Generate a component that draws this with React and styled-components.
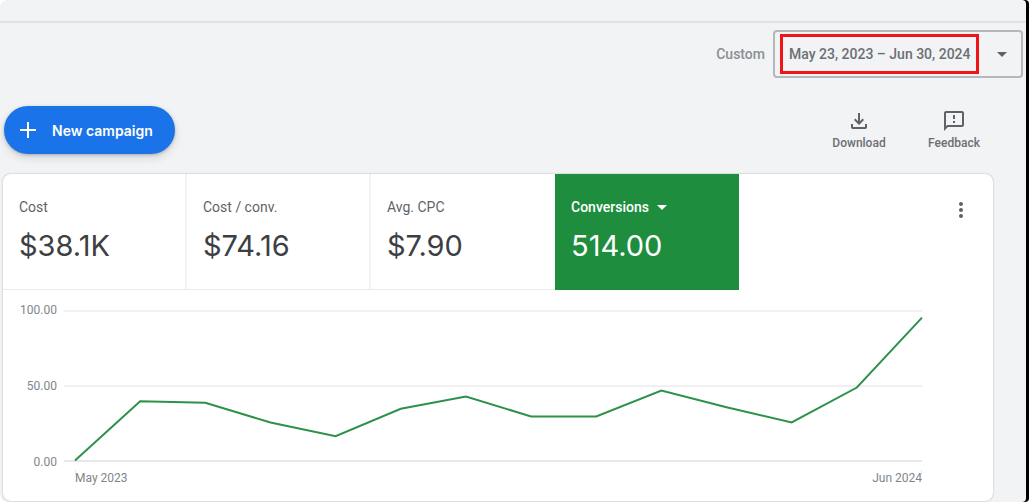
import React from 'react';
import styled, { createGlobalStyle } from 'styled-components';
import { MdMoreVert, MdOutlineFeedback } from 'react-icons/md';

const GlobalStyle = createGlobalStyle`
  * {
    box-sizing: border-box;
  }

  body {
    margin: 0;
    background: #fff;
    font-family: Roboto, 'Liberation Sans', sans-serif;
    color: #3c4043;
  }

  button,
  select {
    font-family: inherit;
    border: 0;
    margin: 0;
    background: none;
    cursor: pointer;
  }
`;

const Shell = styled.div`
  display: flex;
  flex-direction: column;
  margin-right: 5px;
  background: #f1f3f4;
  border-radius: 8px 4px 4px 8px;
  box-shadow: 3px 0 0 #000;
`;

const TopStrip = styled.header`
  height: 23px;
  border-bottom: 2px solid #e0e2e5;
`;

const DateBar = styled.div`
  display: flex;
  justify-content: flex-end;
  align-items: center;
  gap: 8px;
  padding: 7px 3px 0 0;
`;

const DateLabel = styled.label`
  font-size: 14px;
  font-weight: 500;
  color: #8a8f94;
`;

const DateField = styled.div`
  position: relative;
  display: grid;
  align-items: center;
  width: 250px;
  height: 48px;
  border: 2px solid #b4b8bc;
  border-radius: 4px;

  svg {
    grid-area: 1 / 1;
    justify-self: end;
    margin-right: 14px;
    color: #5f6368;
    pointer-events: none;
  }
`;

const DateSelect = styled.select`
  grid-area: 1 / 1;
  appearance: none;
  width: 100%;
  height: 100%;
  padding: 0 32px 0 14px;
  font-size: 14px;
  font-weight: 500;
  color: #6b6f74;
`;

const Highlight = styled.span`
  position: absolute;
  top: 2px;
  left: 5px;
  width: 199px;
  height: 40px;
  border: 3px solid #f01418;
  pointer-events: none;
`;

const Toolbar = styled.div`
  display: flex;
  justify-content: space-between;
  align-items: center;
  padding: 28px 37px 20px 4px;
`;

const NewButton = styled.button`
  display: flex;
  align-items: center;
  gap: 15px;
  height: 48px;
  padding: 0 22px 0 15px;
  border-radius: 24px;
  background: #1a73e8;
  box-shadow: 0 1px 3px rgba(60, 64, 67, 0.3), 0 4px 8px rgba(60, 64, 67, 0.15);
  font-family: Inter, Roboto, sans-serif;
  font-size: 14px;
  font-weight: 600;
  color: #fff;
`;

const Actions = styled.div`
  display: flex;
  gap: 25px;
`;

const Action = styled.button`
  display: flex;
  flex-direction: column;
  align-items: center;
  gap: 2px;
  width: 70px;
  padding: 0;
  font-size: 12px;
  line-height: 16px;
  font-weight: 500;
  color: #6b6f74;

  svg {
    color: #5f6368;
  }
`;

const Card = styled.section`
  margin: 0 33px 1px 3px;
  background: #fff;
  border-radius: 8px;
  box-shadow: 0 0 2px rgba(60, 64, 67, 0.4);
`;

const Metrics = styled.div`
  display: flex;
  align-items: flex-start;
`;

const Metric = styled.div`
  flex: 0 1 184px;
  height: 116px;
  padding: 23px 16px 0;
  border-right: ${p => (p.$active ? '0' : '2px solid #f1f2f3')};
  border-bottom: ${p => (p.$active ? '0' : '1px solid #e8eaed')};
  background: ${p => (p.$active ? '#1e8e3e' : 'transparent')};
  color: ${p => (p.$active ? '#fff' : '#3c4043')};

  &:nth-child(3) {
    border-right: 0;
  }
`;

const MetricName = styled.div`
  display: flex;
  height: 20px;
  font-size: 14px;
  line-height: 20px;
  color: #5f6368;
`;

const MetricPicker = styled.div`
  display: inline-grid;
  align-items: center;
  color: #fff;

  select {
    grid-area: 1 / 1;
    appearance: none;
    padding: 0 18px 0 0;
    font-size: 14px;
    font-weight: 500;
    color: inherit;
  }

  option {
    color: #3c4043;
  }

  svg {
    grid-area: 1 / 1;
    justify-self: end;
    pointer-events: none;
  }
`;

const MetricValue = styled.div`
  margin-top: 11px;
  font-family: Inter, Roboto, sans-serif;
  font-size: 29px;
  line-height: 36px;
`;

const MoreButton = styled.button`
  display: flex;
  margin: 24px 20px 0 auto;
  padding: 0;
  color: #5f6368;
`;

const Chart = styled.div`
  display: grid;
  grid-template-columns: 37px 1fr;
  column-gap: 7px;
  padding: 12px 71px 15px 17px;
  font-size: 12px;
  line-height: 16px;
  color: #80868b;
`;

const YAxis = styled.div`
  display: flex;
  flex-direction: column;
  justify-content: space-between;
  height: 168px;
  text-align: right;
`;

const Plot = styled.div`
  height: 152px;
  margin-top: 8px;
  padding-left: 11px;
  background: linear-gradient(#f0f0f1, #f0f0f1) 0 0 / 100% 2px no-repeat,
    linear-gradient(#f0f0f1, #f0f0f1) 0 50% / 100% 2px no-repeat,
    linear-gradient(#e8e8ea, #e8e8ea) 0 100% / 100% 2px no-repeat;

  svg {
    display: block;
    width: 100%;
    height: 100%;
    overflow: visible;
  }
`;

const XAxis = styled.div`
  grid-column: 2;
  display: flex;
  justify-content: space-between;
  margin-left: 11px;
  background: linear-gradient(#e8e8ea, #e8e8ea) 0 0 / 1px 5px no-repeat,
    linear-gradient(#e8e8ea, #e8e8ea) 100% 0 / 1px 5px no-repeat;
`;

const months = [1, 40, 39, 26, 17, 35, 43, 30, 30, 47, 36, 26, 49, 95];

const points = months
  .map((value, i) => `${(i * 1000) / (months.length - 1)},${100 - value}`)
  .join(' ');

const metrics = [
  { name: 'Cost', value: '$38.1K' },
  { name: 'Cost / conv.', value: '$74.16' },
  { name: 'Avg. CPC', value: '$7.90' },
  { name: 'Conversions', value: '514.00', active: true },
];

const Caret = () => (
  <svg width="10" height="5" viewBox="0 0 10 5" aria-hidden="true">
    <path d="M0 0h10L5 5z" fill="currentColor" />
  </svg>
);

const PlusIcon = () => (
  <svg width="18" height="18" viewBox="0 0 18 18" aria-hidden="true">
    <path d="M9 1v16M1 9h16" stroke="currentColor" strokeWidth="2" />
  </svg>
);

const DownloadIcon = () => (
  <svg width="24" height="24" viewBox="0 0 24 24" aria-hidden="true">
    <path
      fill="currentColor"
      d="M12 16l-5-5 1.4-1.45 2.6 2.6V4h2v8.15l2.6-2.6L17 11zM6 20q-.825 0-1.412-.587Q4 18.825 4 18v-3h2v3h12v-3h2v3q0 .825-.587 1.413Q18.825 20 18 20z"
    />
  </svg>
);

const App = () => (
  <>
    <GlobalStyle />
    <Shell>
      <TopStrip />
      <DateBar>
        <DateLabel htmlFor="range">Custom</DateLabel>
        <DateField>
          <DateSelect id="range">
            <option>May 23, 2023 – Jun 30, 2024</option>
          </DateSelect>
          <Caret />
          <Highlight />
        </DateField>
      </DateBar>

      <Toolbar>
        <NewButton>
          <PlusIcon />
          New campaign
        </NewButton>
        <Actions>
          <Action>
            <DownloadIcon />
            Download
          </Action>
          <Action>
            <MdOutlineFeedback size={24} />
            Feedback
          </Action>
        </Actions>
      </Toolbar>

      <Card>
        <Metrics>
          {metrics.map(({ name, value, active }) => (
            <Metric key={name} $active={active}>
              <MetricName>
                {active ? (
                  <MetricPicker>
                    <select aria-label="Metric">
                      <option>{name}</option>
                    </select>
                    <Caret />
                  </MetricPicker>
                ) : (
                  name
                )}
              </MetricName>
              <MetricValue>{value}</MetricValue>
            </Metric>
          ))}
          <MoreButton aria-label="More options">
            <MdMoreVert size={24} />
          </MoreButton>
        </Metrics>

        <Chart>
          <YAxis>
            <span>100.00</span>
            <span>50.00</span>
            <span>0.00</span>
          </YAxis>
          <Plot>
            <svg viewBox="0 0 1000 100" preserveAspectRatio="none">
              <polyline
                points={points}
                fill="none"
                stroke="#2d9249"
                strokeWidth="2"
                vectorEffect="non-scaling-stroke"
              />
            </svg>
          </Plot>
          <XAxis>
            <span>May 2023</span>
            <span>Jun 2024</span>
          </XAxis>
        </Chart>
      </Card>
    </Shell>
  </>
);

export default App;
